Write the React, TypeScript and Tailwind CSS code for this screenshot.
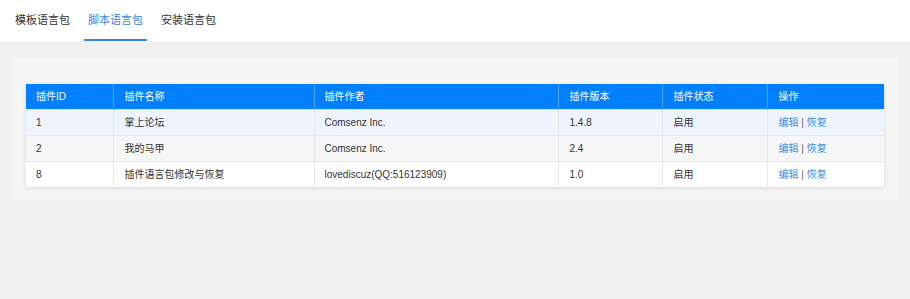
import React from "react";

type Row = {
    id: string;
    name: string;
    author: string;
    version: string;
    status: string;
};

const rows: Row[] = [
    { id: "1", name: "掌上论坛", author: "Comsenz Inc.", version: "1.4.8", status: "启用" },
    { id: "2", name: "我的马甲", author: "Comsenz Inc.", version: "2.4", status: "启用" },
    { id: "8", name: "插件语言包修改与恢复", author: "lovediscuz(QQ:516123909)", version: "1.0", status: "启用" },
];

const rowBg = ["bg-[#edf4fe]", "bg-[#f6f6f6]", "bg-white"];

export default function App() {
    return (
        <div
            className="w-[910px] h-[299px] bg-[#f0f0f0] text-[#333]"
            style={{ fontFamily: '"Liberation Sans", "Noto Sans CJK SC", sans-serif' }}
        >
            {/* Tabs */}
            <div className="h-[41px] bg-white flex items-stretch pl-[11px] gap-[10px] text-[11px]">
                <div className="flex items-center px-[4px] text-[#333]">模板语言包</div>
                <div className="flex items-center px-[4px] text-[#3b86d8] border-b-2 border-[#3b86d8] pt-[2px]">
                    脚本语言包
                </div>
                <div className="flex items-center px-[4px] text-[#333]">安装语言包</div>
            </div>

            {/* Panel */}
            <div className="mx-[12px] mt-[16px] bg-[#f5f5f5] px-[14px] pt-[27px] pb-[13px]">
                <table className="w-full border-collapse text-[10px] bg-white shadow-[0_1px_4px_rgba(0,0,0,0.12)]">
                    <thead>
                        <tr className="bg-[#0080ff] text-white h-[25px]">
                            <th className="w-[87px] text-left font-normal pl-[10px] border-r border-[#4aa3ff]">插件ID</th>
                            <th className="w-[201px] text-left font-normal pl-[11px] border-r border-[#4aa3ff]">插件名称</th>
                            <th className="w-[244px] text-left font-normal pl-[10px] border-r border-[#4aa3ff]">插件作者</th>
                            <th className="w-[104px] text-left font-normal pl-[11px] border-r border-[#4aa3ff]">插件版本</th>
                            <th className="w-[105px] text-left font-normal pl-[11px] border-r border-[#4aa3ff]">插件状态</th>
                            <th className="text-left font-normal pl-[11px]">操作</th>
                        </tr>
                    </thead>
                    <tbody>
                        {rows.map((r, i) => (
                            <tr key={r.id} className={`h-[26px] border-t border-[#e6e6e6] ${rowBg[i]}`}>
                                <td className="pl-[10px] border-r border-[#e6e6e6]">{r.id}</td>
                                <td className="pl-[11px] border-r border-[#e6e6e6]">{r.name}</td>
                                <td className="pl-[10px] border-r border-[#e6e6e6]">{r.author}</td>
                                <td className="pl-[11px] border-r border-[#e6e6e6]">{r.version}</td>
                                <td className="pl-[11px] border-r border-[#e6e6e6]">{r.status}</td>
                                <td className="pl-[11px]">
                                    <span className="text-[#3b8de0]">编辑</span>
                                    <span className="text-[#666]"> | </span>
                                    <span className="text-[#3b8de0]">恢复</span>
                                </td>
                            </tr>
                        ))}
                    </tbody>
                </table>
            </div>
        </div>
    );
}
